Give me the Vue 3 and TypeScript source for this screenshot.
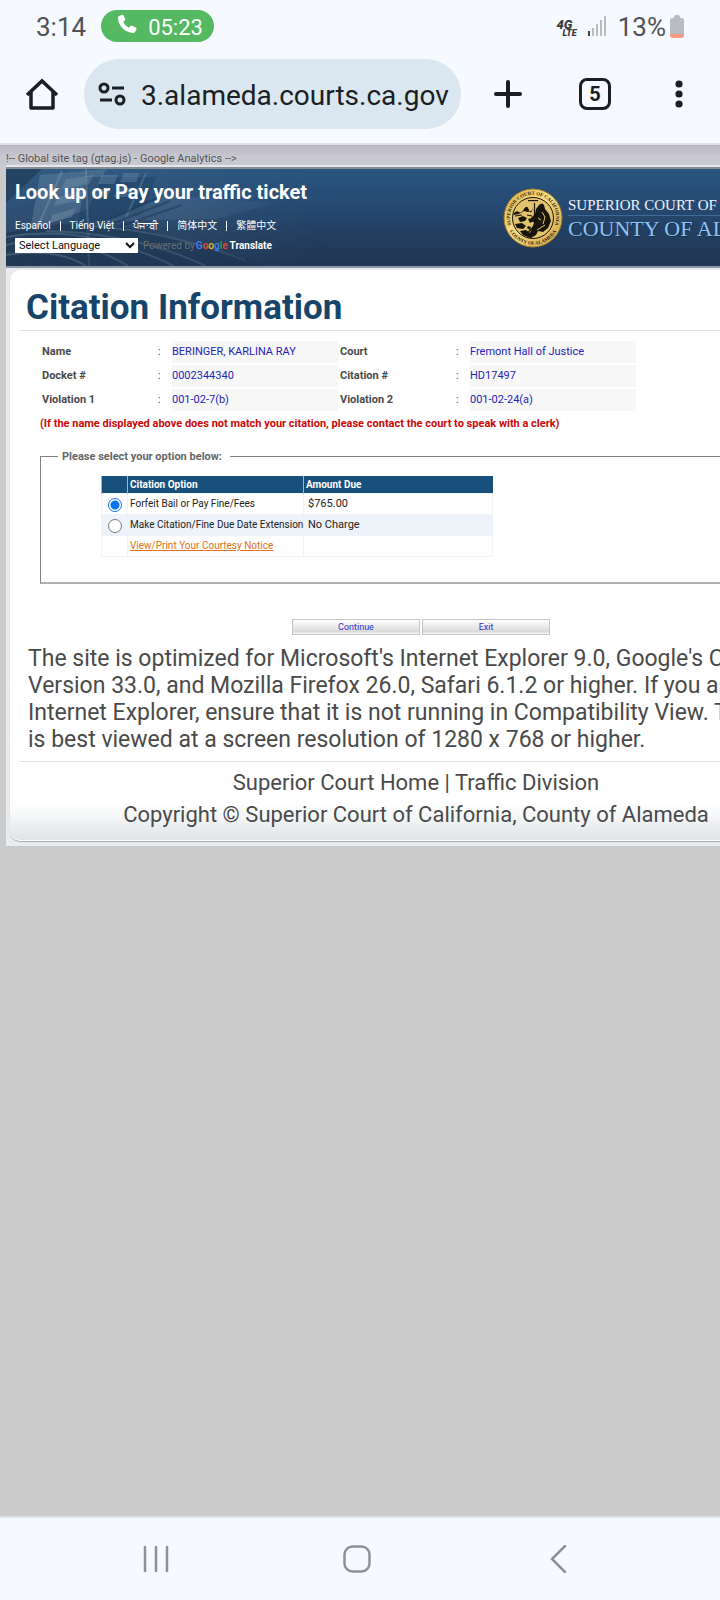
<script setup lang="ts">
import { ref } from 'vue'

interface Detail {
  id: string
  label: string
  value: string
}

const details: Detail[][] = [
  [
    { id: 'name', label: 'Name', value: 'BERINGER, KARLINA RAY' },
    { id: 'court', label: 'Court', value: 'Fremont Hall of Justice' },
  ],
  [
    { id: 'docket', label: 'Docket #', value: '0002344340' },
    { id: 'citation', label: 'Citation #', value: 'HD17497' },
  ],
  [
    { id: 'v1', label: 'Violation 1', value: '001-02-7(b)' },
    { id: 'v2', label: 'Violation 2', value: '001-02-24(a)' },
  ],
]

const languages = ['Español', 'Tiếng Việt', 'ਪੰਜਾਬੀ', '简体中文', '繁體中文']
const address = ref('3.alameda.courts.ca.gov')
const option = ref('pay')
const language = ref('')
</script>

<template>
  <div class="phone">
    <header class="chrome">
      <div class="status">
        <span class="clock">3:14</span>
        <span class="call">
          <svg width="22" height="22" viewBox="0 0 24 24" aria-hidden="true">
            <path fill="#fff" d="M3.6 3.2 6.4 2c.8-.3 1.600 0 2 .8l1.500 3.700c.3.700.1 1.300-.4 1.800L7.900 9.800c1.300 2.700 3.300 4.700 6.200 6.200l1.700-1.700c.5-.5 1.200-.6 1.900-.3l3.800 1.900c.8.4 1.100 1.200.7 2l-1.300 2.500c-.5.9-1.300 1.400-2.300 1.400C10 21.400 2.500 14.200 2.200 5.500c0-1 .5-1.900 1.400-2.300z" />
          </svg>
          <span>05:23</span>
        </span>
        <span class="network">
          <span class="lte"><b>4G</b><b>LTE</b></span>
          <svg width="19" height="20" viewBox="0 0 19 20" aria-hidden="true">
            <rect x="0" y="15" width="2" height="5" fill="#444" />
            <rect x="4" y="12" width="2" height="8" fill="#b9bbbd" />
            <rect x="8" y="8" width="2" height="12" fill="#b9bbbd" />
            <rect x="12" y="4" width="2" height="16" fill="#b9bbbd" />
            <rect x="16" y="0" width="2" height="20" fill="#b9bbbd" />
          </svg>
          <span class="percent">13%</span>
          <svg width="14" height="23" viewBox="0 0 14 23" aria-hidden="true">
            <path d="M4 2q0-2 2-2h2q2 0 2 2v1h2q2 0 2 2v14H0V5q0-2 2-2h2z" fill="#b9bcc0" />
            <path d="M0 19h14v1q0 3-3 3H3q-3 0-3-3z" fill="#f39a85" />
          </svg>
        </span>
      </div>

      <div class="toolbar">
        <button class="icon-btn home" aria-label="Home">
          <svg width="34" height="34" viewBox="0 0 34 34" fill="none" stroke="#1b1e22" stroke-width="3.500" stroke-linejoin="round">
            <path d="M2 18 17 4l15 14" stroke-linejoin="miter" />
            <path d="M6 15v16h22V15" />
          </svg>
        </button>
        <div class="omnibox">
          <svg width="28" height="24" viewBox="0 0 28 24" fill="none" stroke="#1b1e22" stroke-width="3" aria-hidden="true">
            <circle cx="6" cy="6" r="4" />
            <path d="M14 6h12M2 18h12" />
            <circle cx="22" cy="18" r="4" />
          </svg>
          <input v-model="address" type="text" aria-label="Address" />
        </div>
        <div class="actions">
          <button class="icon-btn" aria-label="New tab">
            <svg width="28" height="28" viewBox="0 0 28 28" stroke="#1b1e22" stroke-width="4" stroke-linecap="round"><path d="M14 2v24M2 14h24" /></svg>
          </button>
          <button class="icon-btn" aria-label="Open tabs"><span class="tabs">5</span></button>
          <button class="icon-btn" aria-label="More options">
            <svg width="8" height="28" viewBox="0 0 8 28" fill="#1b1e22">
              <circle cx="4" cy="4" r="3.600" /><circle cx="4" cy="14" r="3.600" /><circle cx="4" cy="24" r="3.600" />
            </svg>
          </button>
        </div>
      </div>
    </header>

    <main class="viewport">
      <div class="strip">!-- Global site tag (gtag.js) - Google Analytics --&gt;</div>
      <div class="site">
        <div class="banner">
          <svg class="photo" width="320" height="97" viewBox="0 0 320 97" aria-hidden="true">
            <defs>
              <linearGradient id="fade"><stop offset="0" stop-color="#fff" /><stop offset=".55" stop-color="#fff" stop-opacity=".7" /><stop offset="1" stop-color="#fff" stop-opacity="0" /></linearGradient>
              <mask id="side"><rect width="320" height="97" fill="url(#fade)" /></mask>
            </defs>
            <g mask="url(#side)">
              <rect width="320" height="97" fill="#5f7f95" opacity=".16" />
              <path d="M0 0h36L0 34z" fill="#223f5d" opacity=".8" />
              <path d="M34 6 100 0l-18 40-58 22z" fill="#86a3b4" opacity=".3" />
              <path d="M80 8h70l-14 38-64 8z" fill="#1e3d5f" opacity=".5" />
              <path d="m60 10 28-4-5 9-27 5zM52 28l26-6-5 9-25 6zM46 46l24-7-4 9-22 6z" fill="#a3b8c3" opacity=".28" />
              <path d="M96 6h16l-4 9H92zM118 4h16l-4 9h-16zM90 20h15l-4 9H86zM112 19h15l-4 9h-15z" fill="#8aa7bb" opacity=".35" />
              <path d="m80 0 3 97M56 2 30 62M140 4l-20 44" stroke="#92a9b8" stroke-width="2" opacity=".35" />
              <path d="m100 52 60-26 110 8-60 16z" fill="#7f9bb0" opacity=".25" />
              <path d="m104 50 50-22M108 54l56-22M112 58l64-22" stroke="#18324d" stroke-width="2" opacity=".5" />
              <path d="M0 64q70-18 150 0l110 33H0z" fill="#162e48" opacity=".45" />
              <path d="M0 76q60-16 122 21M0 86q50-8 80 11M40 62q90 2 160 35M70 56q90 4 170 36M0 68q80-14 168 29" fill="none" stroke="#8da3b3" stroke-width="2" opacity=".3" />
            </g>
          </svg>
          <div class="lead">
            <h2>Look up or Pay your traffic ticket</h2>
            <nav class="langs">
              <template v-for="(name, i) in languages" :key="name">
                <span v-if="i" class="bar"></span>
                <a href="#">{{ name }}</a>
              </template>
            </nav>
            <div class="translate">
              <select v-model="language" aria-label="Select Language"><option value="">Select Language</option></select>
              <span class="powered">Powered by</span>
              <span class="google"><i>G</i><i>o</i><i>o</i><i>g</i><i>l</i><i>e</i></span>
              <b>Translate</b>
            </div>
          </div>
          <div class="brand">
            <svg width="60" height="60" viewBox="0 0 60 60" role="img" aria-label="Court seal">
              <defs>
                <linearGradient id="gold" x2="1" y2="1"><stop offset="0" stop-color="#d9b14c" /><stop offset=".45" stop-color="#f7de86" /><stop offset="1" stop-color="#cda243" /></linearGradient>
                <path id="arc-top" d="M10.500 42A23 23 0 1 1 49.500 42" />
                <path id="arc-bottom" d="M5 40A27 27 0 0 0 55 40" />
              </defs>
              <circle cx="30" cy="30" r="29" fill="url(#gold)" stroke="#a67b2c" />
              <text><textPath href="#arc-top" startOffset="50%" text-anchor="middle">SUPERIOR COURT OF CALIFORNIA</textPath></text>
              <text><textPath href="#arc-bottom" startOffset="50%" text-anchor="middle">COUNTY OF ALAMEDA</textPath></text>
              <circle cx="30" cy="30" r="20.500" fill="#e3c46c" stroke="#17150e" stroke-width="1" />
              <path d="M25 12h10v1.200H25z" fill="#17150e" />
              <path d="M11 25q3-3 5-1t5-3 5 1 4-2v2l-5 2-4-1-5 3-6 1z" fill="#17150e" />
              <path d="M36 17q3-3 5 0l1 4 4 5 2 7-3 7-5 4-5-1-2 4-5 3-4-1 4-6 3-8-3-5 4-4 1-5z" fill="#17150e" />
              <path d="M15 30l5-2 4 2-2 3-5 1zM12 36l7-1 4 3-3 3-6-1zM17 43l6-1 4 3-2 4-5-2zM25 31l4-1 2 3-4 2zM25 38l3 1-1 3-3-2z" fill="#17150e" />
              <path d="M31.500 15v20M22 48l9-10M12 28l7-1M24 27l5 1" stroke="#17150e" stroke-width="1.200" />
              <path d="m39 24 3 5-2 7M34 42l8-5M35 30l3 2" stroke="#e3c46c" stroke-width="1" fill="none" />
            </svg>
            <div class="court">
              <span class="court-top">SUPERIOR COURT OF CALIFORNIA</span>
              <span class="court-name">COUNTY OF ALAMEDA</span>
            </div>
          </div>
        </div>

        <div class="card">
          <h1>Citation Information</h1>
          <table class="details">
            <tbody>
              <tr v-for="(row, i) in details" :key="i">
                <template v-for="cell in row" :key="cell.id">
                  <th scope="row">{{ cell.label }}</th>
                  <td class="colon">:</td>
                  <td class="value">{{ cell.value }}</td>
                </template>
              </tr>
            </tbody>
          </table>
          <p class="warning">(If the name displayed above does not match your citation, please contact the court to speak with a clerk)</p>

          <fieldset>
            <legend>Please select your option below:</legend>
            <table class="options">
              <thead>
                <tr><th class="pick"></th><th class="what">Citation Option</th><th>Amount Due</th></tr>
              </thead>
              <tbody>
                <tr>
                  <td class="pick"><input id="opt-pay" v-model="option" type="radio" name="option" value="pay" /></td>
                  <td><label for="opt-pay">Forfeit Bail or Pay Fine/Fees</label></td>
                  <td class="amount">$765.00</td>
                </tr>
                <tr class="alt">
                  <td class="pick"><input id="opt-extend" v-model="option" type="radio" name="option" value="extend" /></td>
                  <td><label for="opt-extend">Make Citation/Fine Due Date Extension</label></td>
                  <td class="amount">No Charge</td>
                </tr>
                <tr>
                  <td></td>
                  <td><a href="#">View/Print Your Courtesy Notice</a></td>
                  <td></td>
                </tr>
              </tbody>
            </table>
          </fieldset>

          <div class="buttons">
            <button>Continue</button>
            <button>Exit</button>
          </div>

          <p class="note">
            The site is optimized for Microsoft's Internet Explorer 9.0, Google's Chrome<br />
            Version 33.0, and Mozilla Firefox 26.0, Safari 6.1.2 or higher. If you are using<br />
            Internet Explorer, ensure that it is not running in Compatibility View. The site<br />
            is best viewed at a screen resolution of 1280 x 768 or higher.
          </p>
          <footer>
            <div><a href="#">Superior Court Home</a> | <a href="#">Traffic Division</a></div>
            <div>Copyright © Superior Court of California, County of Alameda</div>
          </footer>
        </div>
      </div>
    </main>

    <nav class="system">
      <button aria-label="Recent apps">
        <svg width="28" height="28" viewBox="0 0 28 28" stroke="#8e9196" stroke-width="2.500" stroke-linecap="round"><path d="M3 2v24M14 2v24M25 2v24" /></svg>
      </button>
      <button aria-label="Home screen">
        <svg width="28" height="28" viewBox="0 0 28 28" fill="none" stroke="#8e9196" stroke-width="2.500"><rect x="1.500" y="1.500" width="25" height="25" rx="8" /></svg>
      </button>
      <button aria-label="Back">
        <svg width="28" height="28" viewBox="0 0 28 28" fill="none" stroke="#8e9196" stroke-width="2.500" stroke-linecap="round"><path d="M21 1 8 14l13 13" /></svg>
      </button>
    </nav>
  </div>
</template>

<style>
body {
  margin: 0;
  background: #cbcbcb;
}
</style>

<style scoped>
.phone {
  display: flex;
  flex-direction: column;
  min-height: 100vh;
  font-family: Roboto, "Noto Sans CJK SC", sans-serif;
  color: #4a4a4a;
}
button {
  font-family: inherit;
  cursor: pointer;
}
.chrome {
  background: #f6f9fe;
  border-bottom: 2px solid #dde2ea;
  padding-bottom: 14px;
}
.status {
  display: flex;
  align-items: center;
  height: 52px;
  padding: 0 36px;
  font-size: 26px;
  color: #505256;
}
.clock, .percent {
  padding-top: 2px;
}
.call {
  display: flex;
  align-items: center;
  gap: 10px;
  height: 32px;
  margin-left: 15px;
  padding: 0 11px 0 15px;
  border-radius: 16px;
  background: #55b962;
  color: #fff;
  font-size: 22px;
}
.call span {
  padding-top: 2px;
}
.call svg {
  margin-bottom: 4px;
}
.network {
  display: flex;
  align-items: center;
  gap: 11px;
  margin-left: auto;
}
.lte {
  display: flex;
  flex-direction: column;
  padding-top: 5px;
  font-size: 13px;
  line-height: 9px;
  font-style: italic;
  font-weight: 900;
  color: #3a3c3f;
}
.lte b {
  font-weight: 900;
}
.lte b:last-child {
  font-size: 9px;
  padding-left: 6px;
}
.percent {
  margin-right: -7px;
}
.toolbar {
  display: flex;
  align-items: center;
  padding: 7px 0 0 16px;
}
.icon-btn {
  display: flex;
  align-items: center;
  justify-content: center;
  padding: 0;
  border: 0;
  background: none;
}
.home {
  width: 52px;
  margin-right: 16px;
}
.omnibox {
  display: flex;
  flex: 1;
  align-items: center;
  gap: 15px;
  min-width: 0;
  height: 70px;
  box-sizing: border-box;
  padding: 0 8px 0 14px;
  border-radius: 35px;
  background: #dae7f0;
}
.omnibox svg {
  flex: none;
}
.omnibox input {
  flex: 1;
  min-width: 0;
  padding: 2px 0 0;
  border: 0;
  background: none;
  font: 28px Roboto, sans-serif;
  color: #1b1e22;
  outline: none;
}
.actions {
  display: grid;
  grid-template-columns: 88px 86px 82px;
  margin-left: 3px;
}
.tabs {
  width: 32px;
  height: 32px;
  box-sizing: border-box;
  border: 3px solid #1b1e22;
  border-radius: 8px;
  font-size: 20px;
  line-height: 26px;
  font-weight: 700;
  color: #1b1e22;
}

.viewport {
  flex: 1;
  overflow: hidden;
  background: #cbcbcb;
}
.strip {
  height: 20px;
  padding-left: 6px;
  background: linear-gradient(#b8b7c3, #c8c8d1 60%);
  font-size: 11px;
  line-height: 27px;
  white-space: nowrap;
  color: #555;
}
.site {
  min-width: 820px;
  margin-left: 6px;
  padding-bottom: 5px;
  background: #e9ecef;
}
.banner {
  position: relative;
  display: flex;
  height: 97px;
  border-top: 2px solid #878f96;
  border-bottom: 2px solid #8a97a6;
  box-shadow: 0 -2px #e6e6e8;
  margin-top: 2px;
  background: linear-gradient(#29557f, #264a74 35%, #233e5e 70%, #203455);
}
.photo {
  position: absolute;
  left: 0;
  top: 0;
}
.lead {
  position: relative;
  box-sizing: border-box;
  width: 497px;
  padding-left: 9px;
  color: #fff;
}
h2 {
  margin: 11px 0 0;
  font-size: 20px;
  line-height: 24px;
}
.langs {
  display: flex;
  align-items: center;
  gap: 9px;
  height: 12px;
  margin-top: 16px;
  font-size: 10px;
}
.langs a {
  color: #fff;
  text-decoration: none;
  line-height: 12px;
}
.bar {
  width: 1px;
  height: 10px;
  background: #fff;
}
.translate {
  display: flex;
  align-items: center;
  height: 15px;
  margin-top: 6px;
  font-size: 10px;
}
select {
  width: 123px;
  height: 15px;
  padding: 0;
  border: 0;
  background: #fff;
  font: 11px Roboto, sans-serif;
  color: #111;
}
.powered {
  margin: 0 1px 0 5px;
  color: #6b6f74;
}
.google {
  margin-right: 2px;
  font-weight: 500;
}
.google i {
  font-style: normal;
  color: #4285f4;
}
.google i:nth-child(2), .google i:nth-child(6) {
  color: #ea4335;
}
.google i:nth-child(3) {
  color: #fbbc05;
}
.google i:nth-child(5) {
  color: #34a853;
}
.brand {
  display: flex;
  gap: 5px;
  padding-top: 19px;
}
.brand svg {
  flex: none;
}
.brand text {
  font: bold 5px "Liberation Serif", serif;
  fill: #33270d;
}
.court {
  display: flex;
  flex-direction: column;
  padding-top: 9px;
  font-family: "Liberation Serif", serif;
  white-space: nowrap;
}
.court-top {
  padding-bottom: 1px;
  border-bottom: 1px solid #3d6c9b;
  font-size: 15px;
  line-height: 17px;
  color: #f0f4f8;
}
.court-name {
  font-size: 22px;
  line-height: 26px;
  color: #8cc3f3;
  text-shadow: 1px 1px 1px #17304e;
}

.card {
  margin: 2px 4px 0;
  padding: 0 9px 9px;
  border-radius: 10px;
  background: linear-gradient(transparent calc(100% - 36px), #dfe4e7), #fff;
  border-bottom: 1px solid #fff;
  box-shadow: 0 1px 1px #a5a9ad;
}
h1 {
  margin: 0;
  padding: 16px 0 1px 7px;
  border-bottom: 1px solid #e2e2e4;
  font-size: 35px;
  line-height: 43px;
  color: #17446a;
}
.details {
  margin: 8px 0 0 21px;
  border-spacing: 2px;
  font-size: 11px;
  line-height: 22px;
  table-layout: fixed;
  width: 598px;
}
.details th, .details td {
  padding: 0;
  text-align: left;
}
.details th {
  width: 114px;
}
.details .colon {
  width: 12px;
}
.details .value {
  width: 166px;
  background: #f7f7f8;
  color: #2424b8;
}
.warning {
  margin: 2px 0 0 21px;
  font-size: 11px;
  line-height: 17px;
  font-weight: 700;
  color: #cc0808;
}
fieldset {
  margin: 18px 0 0 21px;
  padding: 13px 0 25px 60px;
  border: 1px solid #808080;
  border-bottom: 2px solid #b0b0b0;
}
legend {
  margin-left: -43px;
  padding: 0 8px 0 4px;
  font-size: 11px;
  line-height: 13px;
  font-weight: 700;
  color: #666;
}
.options {
  width: 392px;
  border-collapse: collapse;
  table-layout: fixed;
  font-size: 10px;
  line-height: 12px;
  color: #222;
}
.options th {
  height: 17px;
  padding: 0 2px;
  background: #18507c;
  border-left: 1px solid #9fb6c9;
  color: #fff;
  text-align: left;
}
.options td {
  height: 20px;
  padding: 0 2px;
  border: 1px solid #eef2f9;
  white-space: nowrap;
}
.options .pick {
  width: 21px;
  text-align: center;
}
.options .what {
  width: 171px;
}
.options .alt td {
  background: #eef3fa;
}
.options .amount {
  padding-left: 4px;
  font-size: 11px;
}
.options a {
  color: #e07020;
}
input[type="radio"] {
  appearance: none;
  display: block;
  width: 14px;
  height: 14px;
  margin: 2px auto 0;
  border: 1px solid #767676;
  border-radius: 50%;
  background: #fff;
}
input[type="radio"]:checked {
  border-color: #0b74f0;
  background: radial-gradient(#0b74f0 4px, #fff 5px);
}
.buttons {
  display: flex;
  justify-content: center;
  gap: 2px;
  margin-top: 35px;
  padding-left: 10px;
}
.buttons button {
  width: 128px;
  height: 16px;
  padding: 0;
  border: 1px solid #c4c4c4;
  background: linear-gradient(#fff, #d9d9d9 85%, #fff);
  font-size: 9px;
  line-height: 12px;
  color: #2f2fc8;
}
.note {
  margin: 10px 0 0;
  padding: 0 0 8px 9px;
  border-bottom: 1px solid #e4e4e6;
  font-size: 23px;
  line-height: 27px;
  white-space: nowrap;
}
footer {
  padding-top: 5px;
  font-size: 22px;
  line-height: 32px;
  text-align: center;
}
footer a {
  color: inherit;
  text-decoration: none;
}

.system {
  display: flex;
  align-items: center;
  height: 82px;
  padding: 0 61px 0 55px;
  background: #f6f9fe;
  border-top: 2px solid #dde2ea;
}
.system button {
  display: flex;
  flex: 1;
  justify-content: center;
  padding: 0;
  border: 0;
  background: none;
}
</style>
